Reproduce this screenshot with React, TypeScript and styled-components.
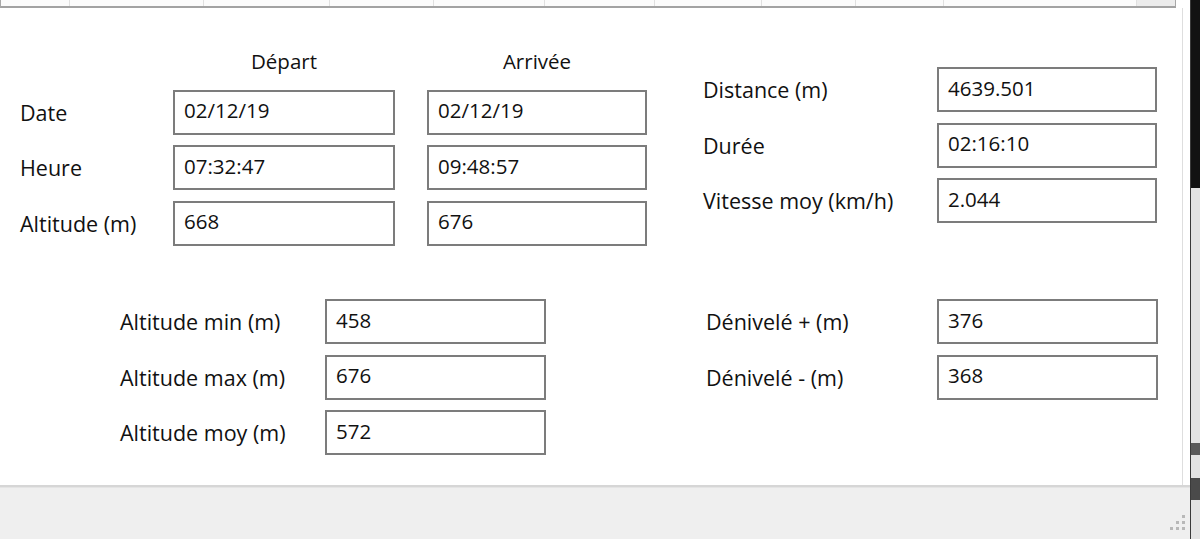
import React from 'react'
import styled, { createGlobalStyle } from 'styled-components'

const GlobalStyle = createGlobalStyle`
  html, body {
    margin: 0;
    padding: 0;
    width: 1200px;
    height: 539px;
    overflow: hidden;
    background: #ffffff;
  }
  * {
    box-sizing: border-box;
  }
`

const gridColumns = [69, 134, 126, 104, 111, 110, 107, 94, 88, 193]

const departArrivee = [
  { label: 'Date', depart: '02/12/19', arrivee: '02/12/19' },
  { label: 'Heure', depart: '07:32:47', arrivee: '09:48:57' },
  { label: 'Altitude (m)', depart: '668', arrivee: '676' },
]

const totals = [
  { label: 'Distance (m)', value: '4639.501' },
  { label: 'Durée', value: '02:16:10' },
  { label: 'Vitesse moy (km/h)', value: '2.044' },
]

const altitudes = [
  { label: 'Altitude min (m)', value: '458' },
  { label: 'Altitude max (m)', value: '676' },
  { label: 'Altitude moy (m)', value: '572' },
]

const denivele = [
  { label: 'Dénivelé + (m)', value: '376' },
  { label: 'Dénivelé - (m)', value: '368' },
]

const edgeSegments = [
  { height: 188, color: '#121212' },
  { height: 255, color: '#e3e3e3' },
  { height: 12, color: '#5a5a5a' },
  { height: 23, color: '#e3e3e3' },
  { height: 22, color: '#4a4a4a' },
  { height: 39, color: '#e3e3e3' },
]

function SizeGrip() {
  const dots = [
    [14, 2],
    [8, 8],
    [14, 8],
    [2, 14],
    [8, 14],
    [14, 14],
  ]
  return (
    <svg width="18" height="18" viewBox="0 0 18 18">
      {dots.map(([x, y]) => (
        <rect key={`${x}-${y}`} x={x} y={y} width="3" height="3" fill="#b8b8b8" />
      ))}
    </svg>
  )
}

export default function App() {
  return (
    <Screen>
      <GlobalStyle />
      <WindowBody>
        <GridStrip>
          {gridColumns.map((w, i) => (
            <GridCell key={i} $width={w} />
          ))}
          <GridCorner />
        </GridStrip>

        <Panel>
          <FormArea>
            <TopRow>
              <FieldGrid $cols="121px 222px 220px" $colGap={32} $top={42} $rows="29px repeat(3, 45px)">
                <span />
                <ColumnHead>Départ</ColumnHead>
                <ColumnHead>Arrivée</ColumnHead>
                {departArrivee.map((row) => (
                  <React.Fragment key={row.label}>
                    <Label>{row.label}</Label>
                    <Field>{row.depart}</Field>
                    <Field>{row.arrivee}</Field>
                  </React.Fragment>
                ))}
              </FieldGrid>

              <FieldGrid $cols="234px 220px" $top={59} $left={56}>
                {totals.map((row) => (
                  <React.Fragment key={row.label}>
                    <Label>{row.label}</Label>
                    <Field>{row.value}</Field>
                  </React.Fragment>
                ))}
              </FieldGrid>
            </TopRow>

            <BottomRow>
              <FieldGrid $cols="205px 221px">
                {altitudes.map((row) => (
                  <React.Fragment key={row.label}>
                    <Label>{row.label}</Label>
                    <Field>{row.value}</Field>
                  </React.Fragment>
                ))}
              </FieldGrid>

              <FieldGrid $cols="231px 221px" $left={160}>
                {denivele.map((row) => (
                  <React.Fragment key={row.label}>
                    <Label>{row.label}</Label>
                    <Field>{row.value}</Field>
                  </React.Fragment>
                ))}
              </FieldGrid>
            </BottomRow>
          </FormArea>
        </Panel>

        <Footer>
          <SizeGrip />
        </Footer>
      </WindowBody>

      <Edge>
        {edgeSegments.map((s, i) => (
          <EdgeSegment key={i} $height={s.height} $color={s.color} />
        ))}
      </Edge>
    </Screen>
  )
}

const Screen = styled.div`
  display: flex;
  width: 1200px;
  height: 539px;
  font-family: 'Open Sans', 'Noto Sans', 'DejaVu Sans', sans-serif;
  color: #111111;
  background: #ffffff;
`

const WindowBody = styled.div`
  display: flex;
  flex-direction: column;
  width: 1190px;
  height: 100%;
`

const GridStrip = styled.div`
  display: flex;
  width: 1176px;
  height: 8px;
  flex-shrink: 0;
  border-left: 1px solid #a8a8a8;
  border-right: 1px solid #a8a8a8;
  border-bottom: 2px solid #a2a2a2;
  background: #fbfbfb;
`

const GridCell = styled.div<{ $width: number }>`
  width: ${(p) => p.$width}px;
  height: 100%;
  border-right: 1px solid #e0e0e0;
  flex-shrink: 0;
`

const GridCorner = styled.div`
  flex: 1;
  height: 100%;
  background: #ececec;
`

const Panel = styled.div`
  flex: 1;
  display: flex;
  padding-right: 7px;
  background: #ffffff;
  border-bottom: 2px solid #d6d6d6;
`

const FormArea = styled.div`
  flex: 1;
  display: flex;
  flex-direction: column;
  border-right: 1px solid #dedede;
`

const TopRow = styled.div`
  display: flex;
  align-items: flex-start;
  padding-left: 20px;
`

const BottomRow = styled.div`
  display: flex;
  align-items: flex-start;
  margin-top: 53.5px;
  padding-left: 120px;
`

const FieldGrid = styled.div<{ $cols: string; $rows?: string; $colGap?: number; $top?: number; $left?: number }>`
  display: grid;
  grid-template-columns: ${(p) => p.$cols};
  ${(p) => (p.$rows ? `grid-template-rows: ${p.$rows};` : 'grid-auto-rows: 45px;')}
  column-gap: ${(p) => p.$colGap ?? 0}px;
  row-gap: 10.5px;
  margin-top: ${(p) => p.$top ?? 0}px;
  margin-left: ${(p) => p.$left ?? 0}px;
`

const ColumnHead = styled.div`
  align-self: start;
  text-align: center;
  font-size: 20.5px;
  line-height: 22px;
`

const Label = styled.div`
  align-self: center;
  font-size: 21.5px;
  line-height: 24px;
  padding-top: 1px;
  white-space: nowrap;
`

const Field = styled.div`
  display: flex;
  align-items: center;
  height: 45px;
  padding: 0 10px 4px 9px;
  border: 2px solid #7c7c7c;
  background: #ffffff;
  font-size: 20.5px;
  white-space: nowrap;
`

const Footer = styled.div`
  display: flex;
  align-items: flex-end;
  justify-content: flex-end;
  height: 52px;
  flex-shrink: 0;
  padding: 0 4px 8px 0;
  background: #efefef;
  border-top: 1px solid #e4e4e4;
`

const Edge = styled.div`
  display: flex;
  flex-direction: column;
  width: 10px;
  height: 100%;
  border-left: 1px solid #3a3a3a;
`

const EdgeSegment = styled.div<{ $height: number; $color: string }>`
  height: ${(p) => p.$height}px;
  flex-shrink: 0;
  background: ${(p) => p.$color};
`
